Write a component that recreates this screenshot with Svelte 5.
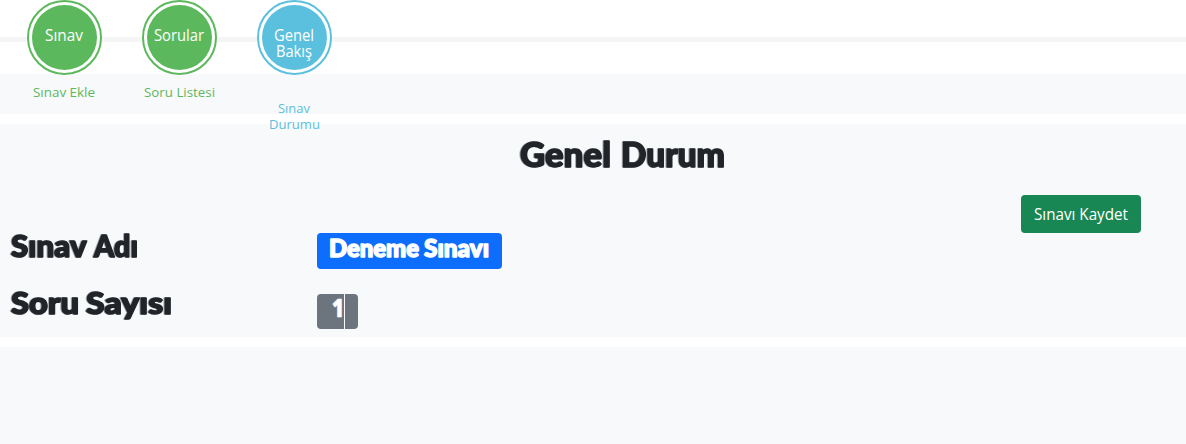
<script>
  const steps = [
    { title: ['Sınav'], caption: ['Sınav Ekle'], kind: 'done', widths: [38], captionWidths: [62] },
    { title: ['Sorular'], caption: ['Soru Listesi'], kind: 'done', widths: [50], captionWidths: [71] },
    { title: ['Genel', 'Bakış'], caption: ['Sınav', 'Durumu'], kind: 'current', widths: [40, 36], captionWidths: [32, 51] }
  ];
  // Each word of a display line: text, start and width.
  const title = [['Genel', 2, 91], ['Durum', 103, 104]];
  const name = [['Sınav', 1, 75], ['Adı', 84, 44]];
  const count = [['Soru', 1, 68], ['Sayısı', 76, 86]];
  const exam = [['Deneme', 0, 90], ['Sınavı', 95, 65]];
  const total = [['1', 0, 12]];
</script>

{#snippet display(words, size, width, height, baseline)}
  <svg class="display" {width} {height}>
    <text y={baseline} font-size={size}>{#each words as [word, x, length], i}{i ? ' ' : ''}<tspan {x} textLength={length} lengthAdjust="spacingAndGlyphs">{word}</tspan>{/each}</text>
  </svg>
{/snippet}

{#snippet label(text, width, size, baseline)}
  <svg class="label" {width} height="16">
    <text x="0" y={baseline} font-size={size} textLength={width} lengthAdjust="spacingAndGlyphs">{text}</text>
  </svg>
{/snippet}

<main>
  <header>
    <div class="steps">
      {#each steps as step}
        <div class="step {step.kind}">
          <div class="ring">
            <div class="disc">
              {#each step.title as line, i}{@render label(line, step.widths[i], 15.5, 13)}{/each}
            </div>
          </div>
          <div class="caption">
            {#each step.caption as line, i}{@render label(line, step.captionWidths[i], 13.5, 13)}{/each}
          </div>
        </div>
      {/each}
    </div>
  </header>
  <section class="strip"></section>
  <section class="summary">
    <h1>{@render display(title, 34, 207, 50, 43)}</h1>
    <div class="content">
      <dl>
        <dt>{@render display(name, 29.5, 130, 44, 30)}</dt>
        <dd><span class="badge blue">{@render display(exam, 24, 162, 36, 24)}</span></dd>
        <dt>{@render display(count, 29.5, 164, 44, 30)}</dt>
        <dd>
          <span class="badge count">{@render display(total, 25, 12, 35, 23)}</span><span class="badge tail"></span>
        </dd>
      </dl>
      <button>{@render label('Sınavı Kaydet', 94, 15.5, 14)}</button>
    </div>
  </section>
  <section class="rest"></section>
</main>

<style>
  :global(body) { background: #fff; overflow: hidden; }
  main { height: 444px; display: flex; flex-direction: column; font-family: "Open Sans", "Noto Sans", sans-serif; color: #212529; }
  svg { display: block; overflow: visible; flex: none; }
  text { fill: currentColor; }
  header { height: 74px; flex: none; background: linear-gradient(#f5f5f5, #f5f5f5) 0 37px / 100% 5px no-repeat; }
  .steps { position: relative; display: flex; gap: 40px; padding-left: 27px; }
  .step { width: 75px; display: flex; flex-direction: column; align-items: center; }
  .done { --tone: #5cb85c; }
  .current { --tone: #5bc0de; }
  .ring { box-sizing: border-box; width: 75px; height: 75px; border: 2px solid var(--tone); border-radius: 50%; padding: 3px; background: #fff; }
  .disc { box-sizing: border-box; width: 65px; height: 65px; padding: 23px 1px 0 0; border-radius: 50%; background: var(--tone); color: #fff; display: flex; flex-direction: column; align-items: center; }
  .caption { margin-top: 9px; padding-right: 1px; color: var(--tone); display: flex; flex-direction: column; align-items: center; }
  .current .caption { margin-top: 25px; }
  .strip { height: 40px; flex: none; margin-bottom: 10px; background: #f8f9fb; }
  .summary { height: 213px; flex: none; margin-bottom: 10px; background: #f8f9fb; }
  .rest { flex: 1; background: #f8f9fb; }
  h1 { margin: 0; padding-left: 518px; height: 71px; }
  .display text { font-family: "Lato", sans-serif; font-weight: 900; stroke: currentColor; stroke-width: 1.5px; stroke-linejoin: round; }
  .count .display text { font-family: "Open Sans", sans-serif; font-weight: 800; stroke-width: 0.5px; }
  h1 .display, dt .display { filter: drop-shadow(-1px 0 0 #a3a6aa); }
  .content { display: flex; justify-content: space-between; padding: 0 45px 0 10px; }
  dl { display: grid; grid-template-columns: 307px auto; grid-template-rows: 57px 44px; margin: 32px 0 0; }
  dt, dd { margin: 0; }
  dd { display: flex; align-items: flex-start; padding-top: 6px; }
  dd:last-child { padding-top: 10px; }
  .badge { box-sizing: border-box; display: block; border-radius: 4px; color: #fff; }
  .blue { width: 185px; height: 36px; padding-left: 12px; background: #0d6efd; }
  .count { width: 27px; height: 35px; padding-left: 15px; background: #6c757d; border-radius: 4px 0 0 4px; }
  .tail { width: 13px; height: 35px; margin-left: 1px; background: #6c757d; border-radius: 0 4px 4px 0; }
  button { width: 120px; height: 38px; border: 0; border-radius: 4px; padding: 0 0 0 13px; background: #198754; color: #fff; font: inherit; }
</style>
